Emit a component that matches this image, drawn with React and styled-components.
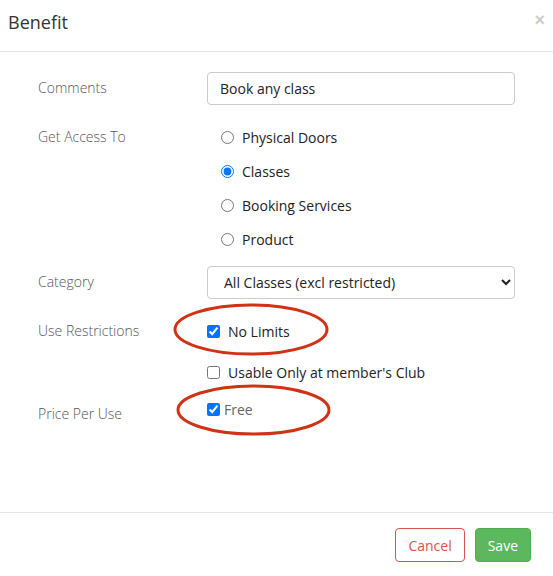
import React from 'react';
import styled, { createGlobalStyle } from 'styled-components';

const GlobalStyle = createGlobalStyle`
  html, body { margin: 0; padding: 0; background: #fff; }
  body { font-family: "Open Sans", "Liberation Sans", sans-serif; font-size: 14px; color: #333; }
  * { box-sizing: border-box; }
`;

const Modal = styled.div`
  width: 553px;
  height: 576px;
  display: flex;
  flex-direction: column;
  background: #fff;
`;

const Header = styled.div`
  height: 52px;
  border-bottom: 1px solid #e5e5e5;
  display: flex;
  align-items: flex-start;
  justify-content: space-between;
  padding: 8px 8px 0 8px;
`;

const Title = styled.h4`
  margin: 0;
  font-size: 18px;
  font-weight: 400;
  line-height: 28px;
  color: #333;
`;

const Close = styled.button`
  border: 0;
  background: none;
  padding: 0;
  margin-top: 2px;
  font-family: "Liberation Sans", sans-serif;
  font-size: 18px;
  font-weight: 700;
  line-height: 20px;
  color: #000;
  opacity: 0.2;
  cursor: pointer;
`;

const Body = styled.div`
  flex: 1;
  padding: 19px 38px 0 38px;
`;

const Row = styled.div`
  display: grid;
  grid-template-columns: 169px 308px;
  align-items: ${p => p.$align || 'start'};
  margin-bottom: ${p => p.$gap || 0}px;
`;

const Label = styled.div`
  font-weight: 300;
  color: #555;
  line-height: 34px;
  margin-top: ${p => p.$offset || 0}px;
`;

const TextInput = styled.input`
  width: 308px;
  height: 33px;
  border: 1px solid #ccc;
  border-radius: 4px;
  padding: 0 12px;
  font-family: inherit;
  font-size: 14px;
  color: #222;
`;

const Select = styled.select`
  width: 308px;
  height: 33px;
  border: 1px solid #ccc;
  border-radius: 4px;
  padding: 0 12px;
  font-family: inherit;
  font-size: 14px;
  color: #222;
  background: #fff;
`;

const OptionList = styled.div`
  display: flex;
  flex-direction: column;
  padding-left: 14px;
`;

const Option = styled.label`
  display: flex;
  align-items: center;
  height: 34px;
  gap: ${p => p.$space || 8}px;
  color: ${p => p.$muted ? '#666' : '#222'};
  position: relative;
  input { margin: 0; width: 13px; height: 13px; }
`;

const Ring = styled.svg`
  position: absolute;
  pointer-events: none;
  left: ${p => p.$left}px;
  top: ${p => p.$top}px;
`;

const Footer = styled.div`
  height: 64px;
  border-top: 1px solid #e5e5e5;
  display: flex;
  justify-content: flex-end;
  align-items: flex-start;
  gap: 10px;
  padding: 15px 22px 0 0;
`;

const Button = styled.button`
  height: 34px;
  padding: 0 12px;
  border-radius: 4px;
  font-family: inherit;
  font-size: 14px;
  border: 1px solid ${p => p.$variant === 'save' ? '#4cae4c' : '#d9534f'};
  background: ${p => p.$variant === 'save' ? '#5cb85c' : '#fff'};
  color: ${p => p.$variant === 'save' ? '#fff' : '#d9534f'};
`;

const Ellipse = ({ left, top, w, h }) => (
  <Ring $left={left} $top={top} width={w} height={h} viewBox={`0 0 ${w} ${h}`}>
    <ellipse
      cx={w / 2}
      cy={h / 2}
      rx={w / 2 - 2}
      ry={h / 2 - 2}
      fill="none"
      stroke="#cf3214"
      strokeWidth="3"
    />
  </Ring>
);

export default function App() {
  return (
    <>
      <GlobalStyle />
      <Modal>
        <Header>
          <Title>Benefit</Title>
          <Close aria-label="Close">×</Close>
        </Header>
        <Body>
          <Row $align="center" $gap={15}>
            <Label>Comments</Label>
            <TextInput defaultValue="Book any class" />
          </Row>
          <Row $gap={9}>
            <Label>Get Access To</Label>
            <OptionList>
              <Option><input type="radio" name="access" />Physical Doors</Option>
              <Option><input type="radio" name="access" defaultChecked />Classes</Option>
              <Option><input type="radio" name="access" />Booking Services</Option>
              <Option><input type="radio" name="access" />Product</Option>
            </OptionList>
          </Row>
          <Row $align="center" $gap={15}>
            <Label>Category</Label>
            <Select defaultValue="all">
              <option value="all">All Classes (excl restricted)</option>
            </Select>
          </Row>
          <Row $gap={7}>
            <Label>Use Restrictions</Label>
            <Option>
              <input type="checkbox" defaultChecked />No Limits
              <Ellipse left={-34} top={-11} w={156} h={53} />
            </Option>
          </Row>
          <Row $gap={3}>
            <Label />
            <Option><input type="checkbox" />Usable Only at member's Club</Option>
          </Row>
          <Row>
            <Label $offset={5}>Price Per Use</Label>
            <Option $space={4} $muted>
              <input type="checkbox" defaultChecked />Free
              <Ellipse left={-31} top={-8} w={155} h={52} />
            </Option>
          </Row>
        </Body>
        <Footer>
          <Button>Cancel</Button>
          <Button $variant="save">Save</Button>
        </Footer>
      </Modal>
    </>
  );
}
